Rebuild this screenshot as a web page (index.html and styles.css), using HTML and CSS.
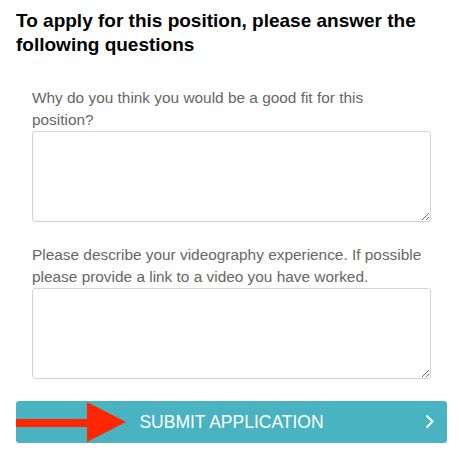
FILE: index.html
```
<!DOCTYPE html>
<html>
<head>
<meta charset="utf-8">
<link rel="stylesheet" href="styles.css">
</head>
<body>
<div class="page">
  <h1 class="title">To apply for this position, please answer the following questions</h1>
  <div class="fields">
    <div class="field">
      <label class="label">Why do you think you would be a good fit for this position?</label>
      <textarea class="input"></textarea>
    </div>
    <div class="field">
      <label class="label">Please describe your videography experience. If possible please provide a link to a video you have worked.</label>
      <textarea class="input"></textarea>
    </div>
  </div>
  <button class="submit">
    <span class="submit-text">SUBMIT APPLICATION</span>
    <svg class="chevron" width="9" height="15" viewBox="0 0 9 15"><polyline points="1.5,1.5 7.5,7.5 1.5,13.5" fill="none" stroke="#fff" stroke-width="2"/></svg>
    <svg class="arrow" width="112" height="42" viewBox="0 0 112 42"><rect x="0" y="18" width="72" height="8" fill="#ff2600"/><polygon points="71,1 110,21 71,41" fill="#ff2600"/></svg>
  </button>
</div>
</body>
</html>
```
FILE: styles.css
```
html, body {
  margin: 0;
  background: #fff;
}
.page {
  padding: 9px 12px 0 16px;
  font-family: "Liberation Sans", Arial, sans-serif;
}
.title {
  margin: 0;
  font-size: 19px;
  line-height: 24px;
  font-weight: bold;
  color: #000;
}
.fields {
  display: flex;
  flex-direction: column;
  gap: 22px;
  margin-top: 30px;
  padding: 0 16px;
}
.field {
  display: flex;
  flex-direction: column;
}
.label {
  max-width: 392px;
  font-size: 15.4px;
  line-height: 22px;
  color: #666;
}
.input {
  box-sizing: border-box;
  display: block;
  width: 399px;
  height: 91px;
  margin: 0;
  border: 1px solid #d4d4d4;
  border-radius: 3px;
  resize: vertical;
  font-family: inherit;
}
.submit {
  position: relative;
  box-sizing: border-box;
  display: flex;
  align-items: center;
  justify-content: center;
  width: 431px;
  height: 42px;
  margin-top: 22px;
  padding: 0;
  border: none;
  border-radius: 3px;
  background: #4ab3c1;
  font-family: "Liberation Sans", Arial, sans-serif;
  font-size: 17.5px;
  color: #fff;
}
.submit-text {
  line-height: 20px;
}
.chevron {
  position: absolute;
  right: 13px;
  top: 13px;
}
.arrow {
  position: absolute;
  left: 0;
  top: 0;
}
```
